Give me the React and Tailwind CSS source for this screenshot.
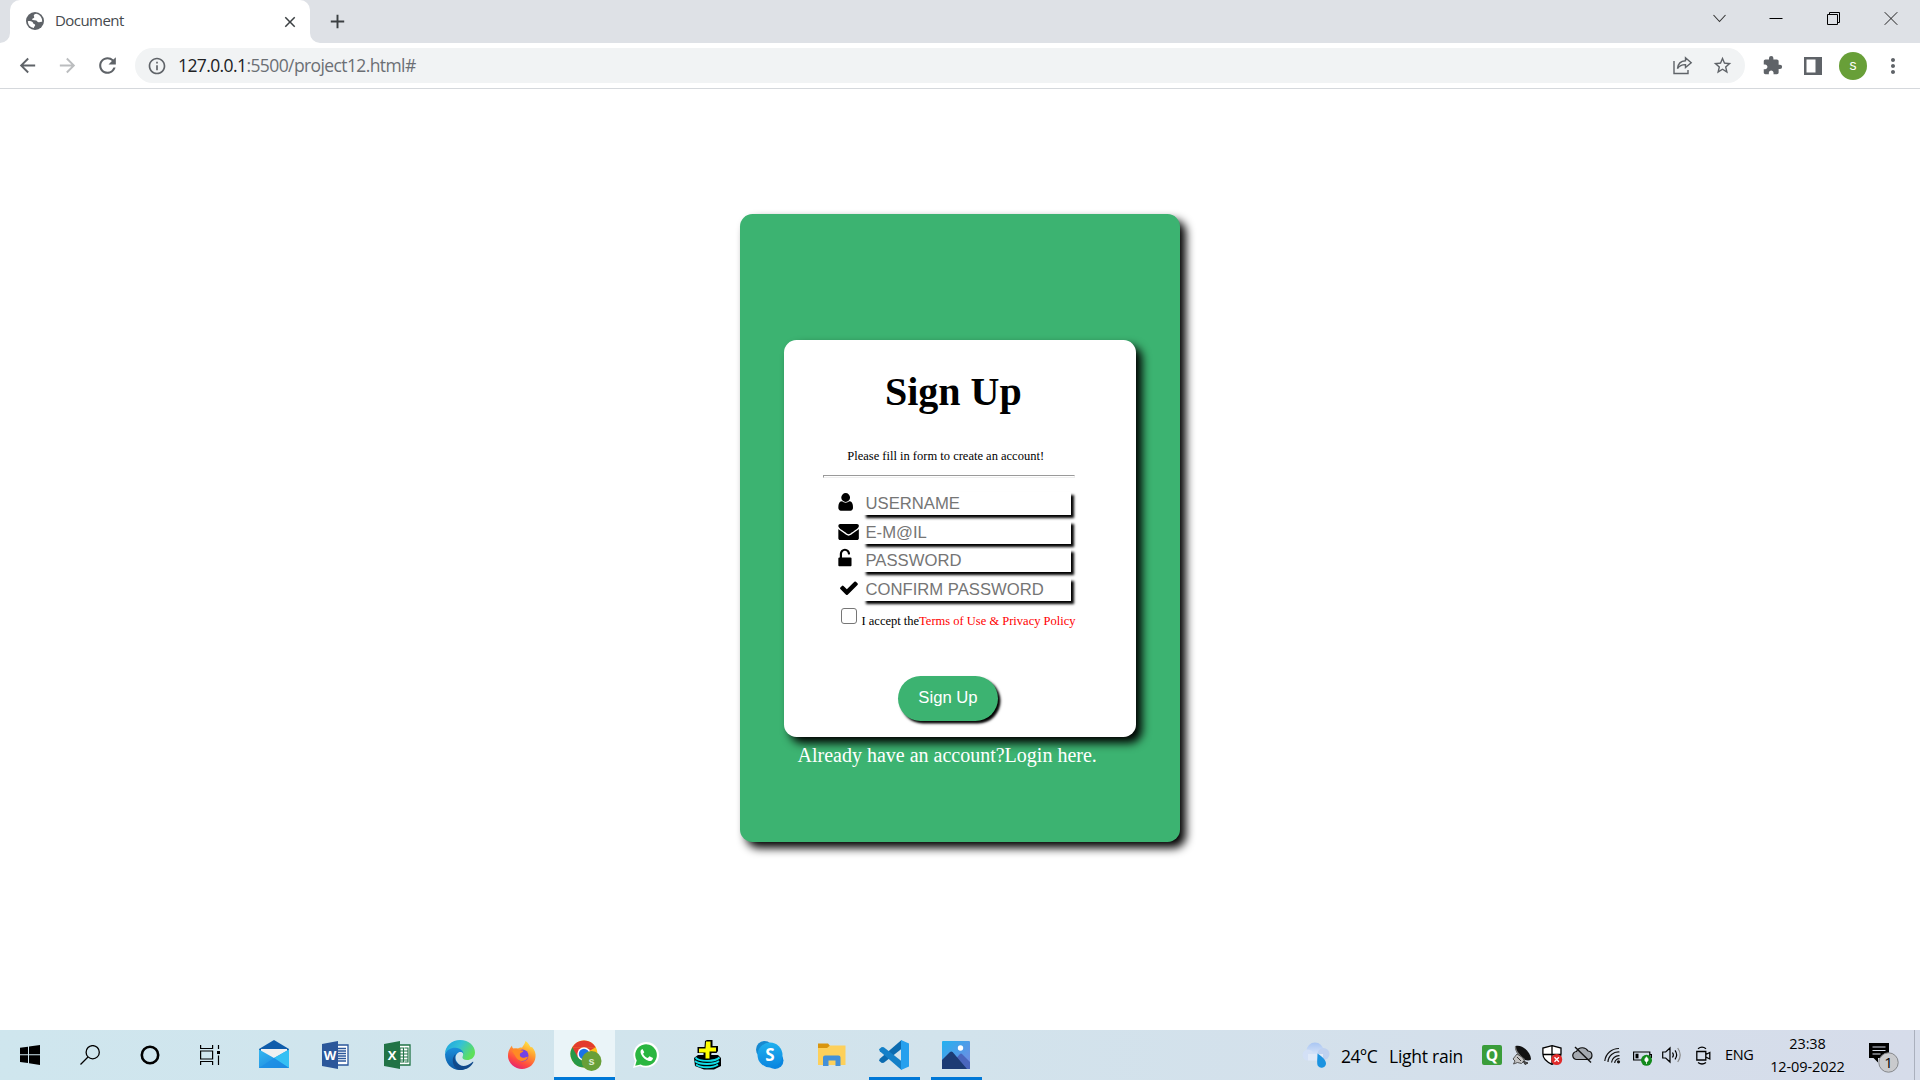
import React from "react";
import { MdArrowBack, MdArrowForward, MdRefresh, MdInfoOutline, MdStarBorder, MdExtension, MdMoreVert, MdClose, MdAdd } from "react-icons/md";

const UI = "font-['Open_Sans','Noto_Sans',sans-serif]";
const SERIF = "font-['Liberation_Serif',serif]";
const SANS = "font-['Liberation_Sans',sans-serif]";

function TabStrip() {
  return (
    <div className="flex h-[43px] bg-[#dee1e6]">
      <div className="flex w-[10px] items-end">
        <svg width="10" height="10" viewBox="0 0 10 10"><path d="M10 0v10H0A10 10 0 0 0 10 0z" fill="#fff" /></svg>
      </div>
      <div className="flex w-[300px] items-center rounded-t-[10px] bg-white">
        <svg className="ml-[16px] mt-[-1px]" width="18" height="18" viewBox="0 0 18 18">
          <circle cx="9" cy="9" r="9" fill="#5f6368" />
          <path d="M10.500 1.800c-2 .3-2.700 1-2.700 2 0 .7.600 1 .4 1.800-.3.900-1.600.6-1.900 1.500-.2.800.6 1.200 1.600 1.200 1.500 0 2.900.1 3.400 1.200.3.700 1 .9 1.900.7.800-.2 1.600-.7 3-.5a7.300 7.300 0 0 0-5.700-7.900z" fill="#fff" />
          <path d="M1.800 9.300c1.500-.5 3.500-.3 4.600.6.900.8.700 1.700 1.700 2 .9.300 1.300.8 1 1.700-.3.800-1 1-1.200 2.500A7.300 7.300 0 0 1 1.800 9.300z" fill="#fff" />
        </svg>
        <span className="ml-[11px] mt-[-3px] flex-1 text-[15px] tracking-[-0.55px] text-[#45494d]">Document</span>
        <MdClose className="mr-[11px] size-[18px] text-[#3c4043]" />
      </div>
      <div className="flex w-[10px] items-end">
        <svg width="10" height="10" viewBox="0 0 10 10"><path d="M0 0v10h10A10 10 0 0 1 0 0z" fill="#fff" /></svg>
      </div>
      <div className="flex items-center pl-[6px]">
        <MdAdd className="size-[23px] text-[#3c4043]" />
      </div>
      <div className="flex-1" />
      <div className="flex items-start pt-[11px]">
        <svg className="mr-[42px]" width="15" height="15" viewBox="0 0 15 15" fill="none" stroke="#333" strokeWidth="1.1"><path d="M1.500 4l6 6.500L13.500 4" /></svg>
        <svg className="mr-[43px]" width="14" height="15" viewBox="0 0 14 15" stroke="#000"><path d="M0.500 7.500h13" /></svg>
        <svg className="mr-[44px]" width="14" height="15" viewBox="0 0 14 15" fill="none" stroke="#000"><path d="M1.500 3.500h10v10h-10zM3.500 3.500v-2h10v10h-2" /></svg>
        <svg className="mr-[22px]" width="14" height="15" viewBox="0 0 14 15" stroke="#222"><path d="M0.700 1.200l12.600 12.600M13.300 1.200L0.700 13.800" /></svg>
      </div>
    </div>
  );
}

function Toolbar() {
  return (
    <div className="flex h-[46px] items-center border-b border-[#d5d8dc] bg-white text-[#5f6368]">
      <MdArrowBack className="ml-[16px] size-[23px]" />
      <MdArrowForward className="ml-[17px] size-[23px] text-[#bbbdbf]" />
      <MdRefresh className="ml-[16px] size-[25px]" />
      <div className="ml-[15px] flex h-[35px] w-[1610px] items-center rounded-full bg-[#f1f3f4]">
        <MdInfoOutline className="ml-[12px] size-[20px]" />
        <div className="ml-[11px] mt-[-2px] flex-1 text-[17.500px] leading-[24px] tracking-[-0.6px]">
          <span className="text-[#202124]">127.0.0.1</span>
          <span className="text-[#6b6f74]">:5500/project12.html#</span>
        </div>
        <svg className="mr-[19px]" width="21" height="20" viewBox="0 0 21 20" fill="none" stroke="#5f6368" strokeWidth="1.400">
          <path d="M2 5v12.500h14V14" />
          <path d="M5.500 12.500c.5-5 3-7.500 8-7.800V1.800l5.700 4.900-5.700 4.800V8.600c-3.500-.1-6 1-8 3.900z" />
        </svg>
        <MdStarBorder className="mr-[12px] size-[21px]" />
      </div>
      <MdExtension className="ml-[17px] size-[21px]" />
      <svg className="ml-[21px]" width="18" height="18" viewBox="0 0 18 18"><path d="M0 0h18v18H0zM2.500 2.500v13h9v-13z" fill="#5f6368" fillRule="evenodd" /></svg>
      <div className={`ml-[17px] flex size-[28px] items-center justify-center rounded-full bg-[#689f38] ${SANS} text-[14px] text-white`}>s</div>
      <MdMoreVert className="ml-[13.500px] size-[24px]" />
    </div>
  );
}

const ICONS = {
  user: "M1536 1399q0 109-62.500 187t-150.500 78h-854q-88 0-150.500-78t-62.500-187q0-85 8.500-160.500t31.500-152 58.500-131 94-89 134.500-34.500q131 128 313 128t313-128q76 0 134.500 34.500t94 89 58.500 131 31.500 152 8.500 160.500zm-256-887q0 159-112.500 271.500t-271.500 112.500-271.500-112.500-112.500-271.500 112.500-271.500 271.500-112.500 271.500 112.500 112.500 271.500z",
  mail: "M1792 710v794q0 66-47 113t-113 47h-1472q-66 0-113-47t-47-113v-794q44 49 101 87 362 246 497 345 57 42 92.500 65.500t94.500 48 110 24.500h2q51 0 110-24.500t94.500-48 92.500-65.500q170-123 498-345 57-39 100-87zm0-294q0 79-49 151t-122 123q-376 261-468 325-10 7-42.500 31t-54 38.500-52 32.500-57.500 27-50 9h-2q-23 0-50-9t-57.500-27-52-32.500-54-38.500-42.500-31q-91-64-262-182.500t-205-142.500q-62-42-117-115.500t-55-136.500q0-78 41.500-130t118.500-52h1472q65 0 112.500 47t47.500 113z",
  lock: "M1376 768q40 0 68 28t28 68v576q0 40-28 68t-68 28h-960q-40 0-68-28t-28-68v-576q0-40 28-68t68-28h32v-320q0-185 131.500-316.500t316.500-131.500 316.500 131.500 131.500 316.500q0 26-19 45t-45 19h-64q-26 0-45-19t-19-45q0-106-75-181t-181-75-181 75-75 181v320h736z",
  check: "M1671 566q0 40-28 68l-724 724-136 136q-28 28-68 28t-68-28l-136-136-362-362q-28-28-28-68t28-68l136-136q28-28 68-28t68 28l294 295 656-657q28-28 68-28t68 28l136 136q28 28 28 68z",
};

const FIELDS = [
  { icon: "user", box: "226 30 1792 1792", label: "USERNAME" },
  { icon: "mail", box: "-30 0 1792 1792", label: "E-M@IL" },
  { icon: "lock", box: "290 30 1792 1792", label: "PASSWORD" },
  { icon: "check", box: "-60 30 1792 1792", label: "CONFIRM PASSWORD" },
];

function SignUpCard() {
  return (
    <div className={`mx-auto mt-[125px] h-[628px] w-[440px] rounded-[12.500px] bg-[#3cb371] px-[44px] pt-[126px] shadow-[6px_6px_10px_black] ${SERIF}`}>
      <div className="h-[397px] w-[352px] rounded-[12.500px] bg-white pl-[39px] pt-[29px] text-black shadow-[6px_6px_10px_black]">
        <h1 className="pl-[62px] text-[40px] font-bold leading-[46px]">Sign Up</h1>
        <p className="mt-[33px] pl-[24.250px] text-[12.500px] leading-[16px]">Please fill in form to create an account!</p>
        <div className="mt-[11px] h-[3px] w-[252px] border border-[#9a9a9a] border-b-[#eee] border-r-[#eee]" />
        <div className="mt-[14px] pl-[15px]">
          {FIELDS.map((f) => (
            <div key={f.icon} className="flex h-[28.700px] items-start">
              <svg className="size-[20.500px] overflow-visible" viewBox={f.box}><path d={ICONS[f.icon]} /></svg>
              <div className={`ml-[4.500px] h-[23px] w-[207.500px] bg-white pl-[2.500px] pt-px ${SANS} text-[16.670px] leading-[21px] text-[#757575] shadow-[2.500px_2.500px_2.500px_black]`}>{f.label}</div>
            </div>
          ))}
        </div>
        <div className="flex items-start pl-[18px] pt-px">
          <div className="size-[16px] rounded-[3px] border border-[#767676] bg-white" />
          <p className="ml-[4.500px] mt-[5px] whitespace-nowrap text-[12.500px] leading-[16px]">I accept the<span className="text-[red]">Terms of Use &amp; Privacy Policy</span></p>
        </div>
        <div className={`ml-[75px] mt-[47.500px] h-[45px] w-[100px] rounded-full bg-[#3cb371] pt-[11px] text-center ${SANS} text-[16.670px] leading-[22px] text-white shadow-[2.500px_2.500px_2.500px_black]`}>Sign Up</div>
      </div>
      <p className="ml-[13.500px] mt-[7px] whitespace-nowrap text-[20px] leading-[23px] text-white">Already have an account?Login here.</p>
    </div>
  );
}

function AppIcon({ name }) {
  const p = { width: 30, height: 30, viewBox: "0 0 30 30" };
  switch (name) {
    case "mail":
      return (
        <svg {...p}>
          <defs><linearGradient id="ml" x1="0" y1="0" x2="1" y2="1"><stop offset="0" stopColor="#35b8f1" /><stop offset="1" stopColor="#1a7fdc" /></linearGradient></defs>
          <path d="M0 9L15 0l15 9v8H0z" fill="#0f5cab" /><path d="M2 9h26v10H2z" fill="#f1f1f1" />
          <path d="M0 9.500L15 18l15-8.500V28H0z" fill="url(#ml)" /><path d="M15 18l15-8.500V28z" fill="#34c0f4" /><path d="M15 18l15 10H0z" fill="#1c8de4" opacity=".7" />
        </svg>
      );
    case "word":
    case "excel": {
      const c = name === "word" ? "#2b579a" : "#217346";
      return (
        <svg {...p}>
          <path d="M15 5h12v20H15z" fill="#fff" stroke={c} strokeWidth="1.300" />
          {name === "word" ? (
            <path d="M17 8.500h8M17 11h8M17 13.500h8M17 16h8M17 18.500h8M17 21h8" stroke={c} strokeWidth="1.300" />
          ) : (
            <path d="M17 8h3.500v14H17zM21.500 8H25v14h-3.500M17 11h8M17 14h8M17 17h8M17 20h8" stroke={c} fill="none" strokeWidth="1.100" />
          )}
          <path d="M1 4l16-3v28L1 26z" fill={c} />
          <text x="9" y="20" textAnchor="middle" fontFamily="Open Sans" fontWeight="700" fontSize="13" fill="#fff">{name === "word" ? "W" : "X"}</text>
        </svg>
      );
    }
    case "edge":
      return (
        <svg {...p}>
          <defs>
            <linearGradient id="eg" x1="0" y1="0" x2="1" y2=".5"><stop offset="0" stopColor="#1ba0e0" /><stop offset=".5" stopColor="#35c1d6" /><stop offset="1" stopColor="#5ee05a" /></linearGradient>
            <linearGradient id="eb" x1="0" y1="0" x2="0" y2="1"><stop offset="0" stopColor="#1b8fdc" /><stop offset="1" stopColor="#0c59a4" /></linearGradient>
          </defs>
          <path d="M0 14C0 6 7 0 15 0c9 0 15 6 15 12.500 0 5-4 7.500-8 7.500-3.500 0-5-1.500-4.500-3 1.500-3 .5-7-5-7.500C6 9 1 11 0 14z" fill="url(#eg)" />
          <path d="M0 14c1.500-4 6-6.500 10.500-6.300 5 .3 8 3.300 8 6.300-1-2-3-2.500-5-1.500-3 1.500-4 6-1.500 9.500S19 28 23 27.500C20 29.500 17 30 15 30 6 30 0 23 0 14z" fill="url(#eb)" />
          <path d="M11 14c-2 2-2 7 2 10s9 2.500 14.500-2c1-.5 1 .5.500 1-3 5-8 7-13 7C8 29 5 18 11 14z" fill="#114a8b" />
        </svg>
      );
    case "firefox":
      return (
        <svg {...p}>
          <defs><linearGradient id="fx" x1=".8" y1="0" x2=".3" y2="1"><stop offset="0" stopColor="#fff04a" /><stop offset=".4" stopColor="#ff9a2e" /><stop offset=".75" stopColor="#ff4a40" /><stop offset="1" stopColor="#e22174" /></linearGradient></defs>
          <path d="M18.500 1c3 2 4 4.500 5 6 1 .5 1.500 0 1.500 0 3 3 4 7 3.500 10C28 24 22 29 15 29S1 23 1 16C1 11 3 8 5 5.500c0 1.500.5 2.500 1.500 3C8 8 10 8 11 8.500c2-1 3-1 4-.8C16 6 18 4 18.500 1z" fill="url(#fx)" />
          <circle cx="15.500" cy="15.500" r="6" fill="#7542e5" />
          <path d="M5 11c3-2 5-2.500 8-1 1 .5 3 .5 3.500.8-.5 1.700-3 2-3.500 3-.5 2 0 3.200 2.500 4 2 .4 4-1.300 5.500-1-1 3.500-5 5-8 4-4-1.500-5-6-8-9.800z" fill="#ff8a24" />
        </svg>
      );
    case "chrome":
      return (
        <svg className="ml-[2px]" width="32" height="32" viewBox="0 0 32 32">
          <circle cx="14" cy="15" r="13.500" fill="#fbc116" />
          <path d="M2.300 8.250A13.500 13.500 0 0 1 25.700 8.250H14z" fill="#e33b2e" /><path d="M2.300 8.250A13.500 13.500 0 0 0 14 28.500l5.800-10L14 15z" fill="#279847" />
          <path d="M14 8.300h11.700L14 15 8 18.500 2.300 8.250z" fill="#e33b2e" />
          <circle cx="14" cy="15" r="6.700" fill="#fff" /><circle cx="14" cy="15" r="5.200" fill="#1a73e8" />
          <circle cx="21.500" cy="22" r="10" fill="#689f38" />
          <text x="21.500" y="26" textAnchor="middle" fontFamily="Liberation Sans" fontWeight="700" fontSize="11" fill="#dcebcf">s</text>
        </svg>
      );
    case "whatsapp":
      return (
        <svg {...p}>
          <path d="M2 28l2-7A12.800 12.800 0 1 1 9 26z" fill="#fff" />
          <path d="M4.200 25.800l1.500-5.300A10.800 10.800 0 1 1 9.600 24.400z" fill="#2ab640" />
          <path d="M11.500 9c-2 .5-2.500 2.500-1.500 5 1.500 3.500 4.500 6 8 7 2 .4 3.800-.6 4-3l-3.500-1.800-1.700 1.900c-2-.8-3.800-2.300-4.700-4.400l1.200-1.500z" fill="#fff" />
        </svg>
      );
    case "plus":
      return (
        <svg {...p}>
          <path d="M1 18l4-3h20l3 3v8l-7 3.500H11L2 26z" fill="#000" />
          <g fill="none" stroke="#12dfe8" strokeWidth="1.900"><path d="M2.500 17.500c3 4.500 20 4.500 24 0M2 21c5 4 19 4 24 0M3 24.500c5 3.700 17 3.700 22 0" /></g>
          <path d="M12 1l2-1h5.500v6H25v5l-1.500 2h-5l-1 6.500h-7V13H4.500V7h7z" fill="#000" />
          <path d="M13 1.500h4.500v6H23v4h-6.500v7h-4V12.500H6V8.500h6.500z" fill="#ffff00" />
        </svg>
      );
    case "skype":
      return (
        <svg {...p}>
          <defs><linearGradient id="sk" x1="0" y1="0" x2="0" y2="1"><stop offset="0" stopColor="#1fb0ee" /><stop offset="1" stopColor="#0a86e0" /></linearGradient></defs>
          <circle cx="9.500" cy="9.500" r="8.500" fill="#1689d0" /><circle cx="20" cy="20.500" r="8.500" fill="#0a86e0" /><circle cx="15" cy="15" r="12.500" fill="url(#sk)" />
          <text x="15" y="21" textAnchor="middle" fontFamily="Open Sans" fontWeight="700" fontSize="17" fill="#fff">S</text>
        </svg>
      );
    case "folder":
      return (
        <svg {...p}>
          <path d="M1 3.500h10l2.500 3V8H1z" fill="#d9950f" /><path d="M1 8h9l3-2.500h15.500V25H1z" fill="#fdd05b" />
          <path d="M6 26V17.500q0-2 2-2h13.500q2 0 2 2V26h-5v-5.500h-7V26z" fill="#4390d8" />
        </svg>
      );
    case "vscode":
      return (
        <svg {...p}>
          <path d="M22.500 0L.8 18.700 0 20.700 2.800 23l2-.2L23 8.500z" fill="#0b6bb0" />
          <path d="M22.500 30L.8 11.300 0 9.300l2.800-2.300 2 .2L23 21.500z" fill="#1480c8" />
          <path d="M22 0l8 3.500v23L22 30z" fill="#27a0ee" />
        </svg>
      );
    default:
      return (
        <svg {...p}>
          <defs><linearGradient id="ph" x1="0" y1="0" x2="1" y2="1"><stop offset="0" stopColor="#22b2f0" /><stop offset="1" stopColor="#7c86e0" /></linearGradient></defs>
          <rect x="1" y="1" width="28" height="28" rx="1" fill="url(#ph)" />
          <path d="M12 22l7-8q1-1 2 0l8 8v7H12z" fill="#4a66bd" /><path d="M1 20l8-8q1.300-1 2.600 0L26 29H1z" fill="#1c3b74" /><circle cx="19.500" cy="8" r="2.700" fill="#fff" />
        </svg>
      );
  }
}

const APPS = ["mail", "word", "excel", "edge", "firefox", "chrome", "whatsapp", "plus", "skype", "folder", "vscode", "photos"];
const UNDERLINE = { chrome: "w-[61px]", vscode: "w-[51px]", photos: "w-[51px]" };

function Taskbar() {
  return (
    <div className="flex h-[50px] bg-linear-to-r from-[#cfe6ee] via-[#d2e3ec] to-[#d6dcea] text-black">
      <div className="flex items-center pl-[20px]">
        <svg width="20" height="20" viewBox="0 0 20 20"><path d="M0 2.800L8 1.700v7.600H0zM9 1.500L20 0v9.300H9zM0 10.300h8v7.800L0 17zM9 10.300h11V20L9 18.300z" /></svg>
        <svg className="ml-[40px]" width="20" height="20" viewBox="0 0 20 20" fill="none" stroke="#000" strokeWidth="1.300"><circle cx="12.700" cy="7.200" r="6.600" /><path d="M8 12L.5 19.500" /></svg>
        <svg className="ml-[40px]" width="20" height="20" viewBox="0 0 20 20" fill="none" stroke="#000" strokeWidth="2.600"><circle cx="10" cy="10" r="8.200" /></svg>
        <svg className="ml-[40px]" width="20" height="20" viewBox="0 0 20 20" fill="none" stroke="#000" strokeWidth="1.200"><path d="M.6 0v3.500h12V0M.6 6h12v8H.6zM.6 20v-3.500h12V20M18.500 0v4M18.500 10.500V20" /><path d="M17 6h3v3h-3z" fill="#000" stroke="none" /></svg>
      </div>
      <div className="ml-[23px] flex">
        {APPS.map((a) => (
          <div key={a} className={a === "chrome" ? "ml-px flex w-[61px] flex-col items-center bg-[#eaf4f8]" : "flex w-[62px] flex-col items-center"}>
            <div className="flex h-[47px] items-center pt-[3px]"><AppIcon name={a} /></div>
            {UNDERLINE[a] && <div className={`h-[3px] bg-[#0078d7] ${UNDERLINE[a]}`} />}
          </div>
        ))}
      </div>
      <div className="flex-1" />
      <div className="flex w-[618px] items-center">
        <svg width="28" height="26" viewBox="0 0 28 26">
          <defs><linearGradient id="cl" x1="0" y1="0" x2="0" y2="1"><stop offset="0" stopColor="#a9c6f3" /><stop offset="1" stopColor="#e9effa" /></linearGradient></defs>
          <circle cx="13" cy="9" r="8.500" fill="url(#cl)" /><circle cx="6" cy="13" r="5.500" fill="#d3e0f6" /><circle cx="21.500" cy="12" r="6" fill="#bfd1ef" /><path d="M6 12h15v6.500H6z" fill="#e0e9f8" />
          <path d="M15.500 11.500c5 3.500 8.500 6.500 8.500 10a4.500 4.500 0 0 1-8 2.500c-1.500-2-.5-7-.5-12.500z" fill="#1b93e0" />
        </svg>
        <span className="ml-[11px] mt-[2px] w-[48px] whitespace-nowrap text-[17.500px] tracking-[-0.600px]">24°C</span>
        <span className="mt-[2px] w-[93px] whitespace-nowrap text-[17.500px] tracking-[-0.250px]">Light rain</span>
        <svg width="20" height="20" viewBox="0 0 20 20"><rect width="20" height="20" rx="2" fill="#3a9d3a" /><text x="10" y="15.500" textAnchor="middle" fontFamily="Open Sans" fontWeight="700" fontSize="15.500" fill="#fff">Q</text></svg>
        <svg className="ml-[10px]" width="20" height="20" viewBox="0 0 20 20"><path d="M3.500 1C10-1 19 7 19 14.500c-2 1.500-4 1-6 .5L5 8C3.500 5 3 3 3.500 1z" fill="#111" /><path d="M3.500 1.500c-.5 3.500 4 10 9 13" fill="none" stroke="#777" strokeWidth="1.300" /><path d="M1.500 19l1.500-3-2-2 4-5 5 3 2.500 3.500-3 3-4-1z" fill="#c4c4c4" stroke="#444" strokeWidth=".9" /><path d="M5 12l4 4M11 16l5 2-3 1.500z" stroke="#333" fill="#555" /></svg>
        <svg className="ml-[10px]" width="21" height="20" viewBox="0 0 21 20"><path d="M10 .7L19 3v6c0 5-4 8-9 10.300C5 17 .9 14 .9 9V3z" fill="#fff" stroke="#000" strokeWidth="1.300" /><path d="M10 1v18M1 9.500h18" stroke="#000" strokeWidth="1.300" /><circle cx="14.700" cy="14.500" r="5.500" fill="#e02b2b" /><path d="M12.500 12.300l4.400 4.400m0-4.400l-4.400 4.400" stroke="#fff" strokeWidth="1.300" /></svg>
        <svg className="ml-[9px]" width="21" height="18" viewBox="0 0 21 18"><path d="M5 13.500a4 4 0 0 1-.5-8A6.500 6.500 0 0 1 16 5a4.300 4.300 0 0 1 .5 8.500z" fill="#a4a9b0" stroke="#111" strokeWidth="1.200" /><path d="M3 1l16 15.500" stroke="#111" strokeWidth="1.400" /></svg>
        <svg className="ml-[11px]" width="17" height="17" viewBox="0 0 17 17" fill="none" stroke="#111" strokeWidth="1.200"><path d="M.8 14A14 14 0 0 1 15 1.500M4 15A10.500 10.500 0 0 1 15.500 5M7.500 15.500A7.500 7.500 0 0 1 15.500 8.700" /><path d="M10.700 16a4.500 4.500 0 0 1 4.800-4.300" /><circle cx="14.500" cy="14.800" r="1.600" fill="#111" stroke="none" /></svg>
        <svg className="ml-[12px] mt-[5px]" width="19" height="16" viewBox="0 0 19 16"><path d="M.6 2h16.200v8H.6zM17 4.500h1.500v3H17" fill="none" stroke="#000" strokeWidth="1.200" /><path d="M2.500 3.700h3v4.600h-3z" /><circle cx="13.500" cy="10.300" r="5.500" fill="#128a1c" /><path d="M13.500 7c2 1.500 2.500 4 0 5-2.500-1-2-3.500 0-5zm0 3v4" fill="#fff" stroke="#fff" strokeWidth=".7" /></svg>
        <svg className="ml-[10px]" width="20" height="18" viewBox="0 0 20 18" fill="none" stroke="#000" strokeWidth="1.200"><path d="M.7 6h3L8 2v14l-4.300-4h-3zM10.500 6.500q1.700 2.500 0 5M13 4.300q3.300 4.500 0 9" /><path d="M15.700 2q5 7 0 14" stroke="#888" /></svg>
        <svg className="ml-[14px]" width="15" height="19" viewBox="0 0 15 19" fill="none" stroke="#000" strokeWidth="1.300"><path d="M.8 5.500h9v8.500h-9zM9.800 8.500l4-2v6.500l-4-2M2 2.700q4-3 8 0M2 16.500q4 3 8 0" /></svg>
        <span className="ml-[14px] w-[33px] text-[14.500px] tracking-[-0.300px]">ENG</span>
        <div className="w-[97px] text-center text-[14.500px] leading-[23px] tracking-[-0.100px]">
          <div className="ml-[2px]">23:38</div>
          <div className="ml-[2px] whitespace-nowrap">12-09-2022</div>
        </div>
        <svg className="ml-[14px] mt-[6px]" width="30" height="30" viewBox="0 0 30 30"><path d="M0 0h20v15H9v4.500L4.500 15H0z" /><path d="M3.500 4h13M3.500 7.500h13M3.500 11h8" stroke="#d6dcea" strokeWidth="1.200" /><circle cx="19.500" cy="19.500" r="9.700" fill="#c9cacd" stroke="#85878b" /><text x="19.500" y="25" textAnchor="middle" fontFamily="Open Sans" fontSize="15" fill="#000">1</text></svg>
        <div className="ml-auto mr-[5px] h-[50px] w-px bg-[#aab0bd]" />
      </div>
    </div>
  );
}

export default function App() {
  return (
    <div className={`flex h-[1080px] w-[1920px] flex-col overflow-hidden bg-white ${UI}`}>
      <TabStrip />
      <Toolbar />
      <main className="flex-1">
        <SignUpCard />
      </main>
      <Taskbar />
    </div>
  );
}
